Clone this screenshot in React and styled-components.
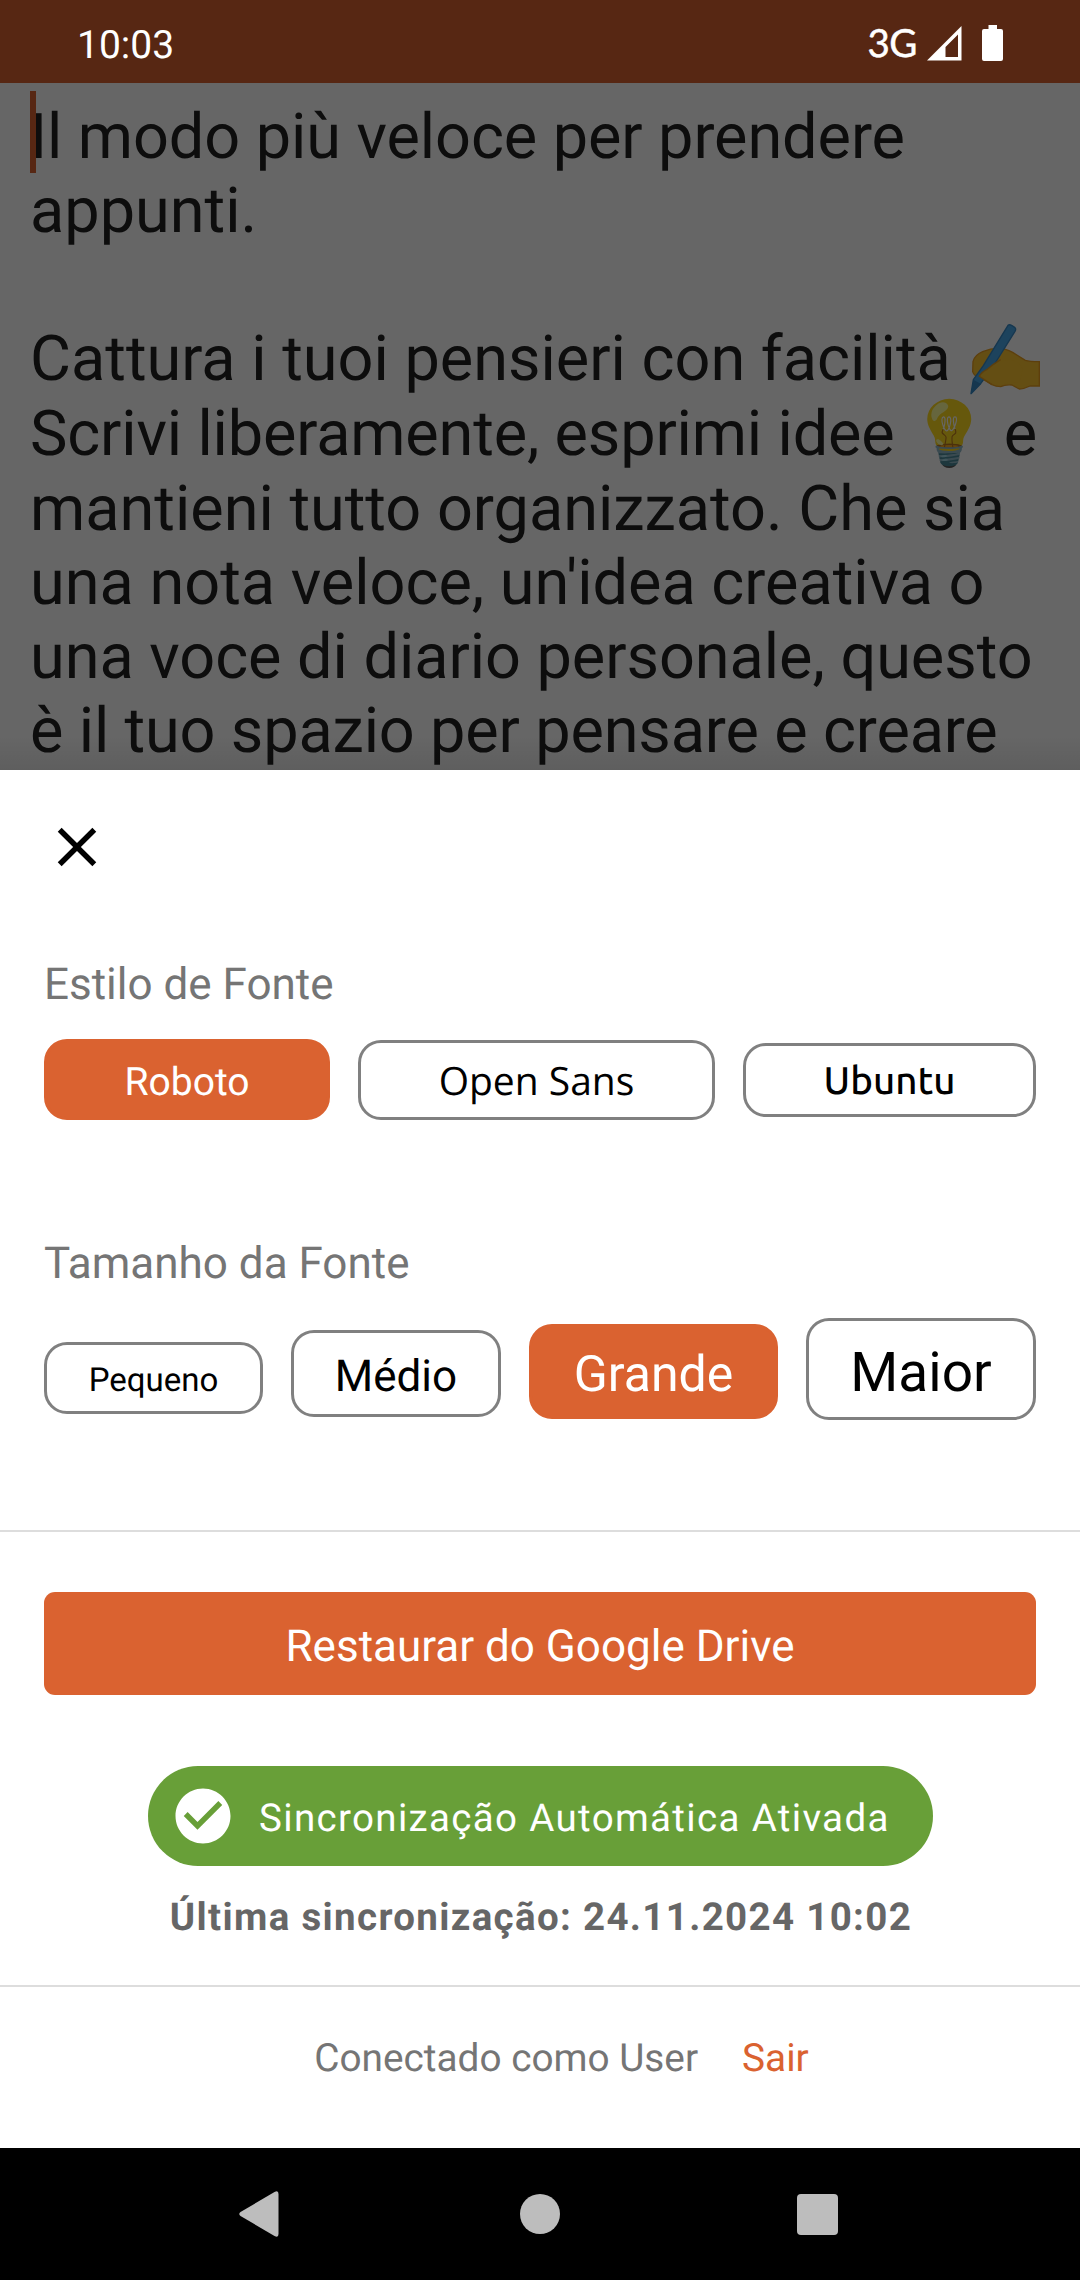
import React, { useState } from "react";
import styled, { createGlobalStyle } from "styled-components";
import { MdCheckCircle, MdClose } from "react-icons/md";

const fontStyles = [
  {
    name: "Roboto",
    family: "Roboto",
    size: 39,
    width: 286,
    height: 81,
    top: 0,
    pad: 6,
  },
  {
    name: "Open Sans",
    family: "Open Sans",
    size: 39,
    width: 357,
    height: 80,
    top: 1,
    pad: 1,
  },
  {
    name: "Ubuntu",
    family: "Ubuntu",
    size: 38.5,
    width: 293,
    height: 74,
    top: 4,
    pad: 2,
    weight: 500,
  },
];

const fontSizes = [
  { name: "Pequeno", size: 33, width: 219, height: 72, top: 24, pad: 4 },
  { name: "Médio", size: 44, width: 210, height: 87, top: 12, pad: 4 },
  { name: "Grande", size: 50, width: 249, height: 95, top: 6, pad: 7 },
  { name: "Maior", size: 55, width: 230, height: 102, top: 0, pad: 8 },
];

const App = () => {
  const [fontStyle, setFontStyle] = useState("Roboto");
  const [fontSize, setFontSize] = useState("Grande");

  return (
    <>
      <GlobalStyle />
      <Screen>
        <StatusBar>
          <Clock>10:03</Clock>
          <StatusIcons>
            <Network>3G</Network>
            <svg width="35" height="35" viewBox="0 0 35 35">
              <path
                fill="#fff"
                fillRule="evenodd"
                d="M34.5 0V34.5H0L34.5 0ZM31 8.5L18.5 21V31H31V8.5Z"
              />
            </svg>
            <Battery width="21" height="36" viewBox="0 0 21 36">
              <path
                fill="#fff"
                d="M6.5 0H15V4H19Q21 4 21 6V34Q21 36 19 36H2Q0 36 0 34V6Q0 4 2 4H6.5Z"
              />
            </Battery>
          </StatusIcons>
        </StatusBar>

        <Note>
          <Caret />
          <Line $tracking={-0.08}>Il modo più veloce per prendere</Line>
          <Line>appunti.</Line>
          <Line />
          <HandLine $tall>
            <span>Cattura i tuoi pensieri con facilità </span>
            <WritingHand />
          </HandLine>
          <Line $tall $tracking={-0.16}>
            Scrivi liberamente, esprimi idee <Emoji>💡</Emoji> e
          </Line>
          <Line>mantieni tutto organizzato. Che sia</Line>
          <Line>una nota veloce, un'idea creativa o</Line>
          <Line $tracking={-0.04}>una voce di diario personale, questo</Line>
          <Line $tracking={-0.15}>è il tuo spazio per pensare e creare</Line>
          <Scrim />
        </Note>

        <Sheet>
          <CloseButton>
            <MdClose size={66} />
          </CloseButton>

          <Label>Estilo de Fonte</Label>
          <StyleRow>
            {fontStyles.map((item) => (
              <Chip
                key={item.name}
                $family={item.family}
                $weight={item.weight}
                $size={item.size}
                $width={item.width}
                $height={item.height}
                $top={item.top}
                $pad={item.pad}
                $active={fontStyle === item.name}
                onClick={() => setFontStyle(item.name)}
              >
                {item.name}
              </Chip>
            ))}
          </StyleRow>

          <Label>Tamanho da Fonte</Label>
          <SizeRow>
            {fontSizes.map((item) => (
              <Chip
                key={item.name}
                $size={item.size}
                $width={item.width}
                $height={item.height}
                $top={item.top}
                $pad={item.pad}
                $active={fontSize === item.name}
                onClick={() => setFontSize(item.name)}
              >
                {item.name}
              </Chip>
            ))}
          </SizeRow>

          <Divider />
          <RestoreButton>Restaurar do Google Drive</RestoreButton>
          <SyncBadge>
            <MdCheckCircle size={66} />
            <span>Sincronização Automática Ativada</span>
          </SyncBadge>
          <LastSync>Última sincronização: 24.11.2024 10:02</LastSync>
          <Divider />
          <Account>
            <span>Conectado como User</span>
            <SignOut>Sair</SignOut>
          </Account>
        </Sheet>

        <NavBar>
          <svg width="40" height="46" viewBox="0 0 40 46">
            <path
              fill="#bdbdbd"
              d="M1.5 21L35.5 1Q39.5 -1 39.5 3V43Q39.5 47 35.5 45L1.5 25Q-1 23 1.5 21Z"
            />
          </svg>
          <HomeKey />
          <RecentsKey />
        </NavBar>
      </Screen>
    </>
  );
};

const WritingHand = () => (
  <Hand
    width="80"
    height="80"
    viewBox="0 0 240 240"
    role="img"
    aria-label="✍️"
  >
    <path
      fill="#fbb912"
      stroke="#e59100"
      strokeWidth="4"
      d="M21 128Q26 108 50 98Q74 88 96 88Q118 88 140 100L178 124Q190 128 220 128V201H192Q176 209 160 210Q148 204 138 198Q118 196 104 203Q90 203 78 197L44 176Q24 172 20 158Z"
    />
    <path
      fill="#2f9be6"
      stroke="#1a78bd"
      strokeWidth="4"
      strokeLinejoin="round"
      d="M126 19Q130 15 138 20L147 26Q151 30 147 37L84 138L44 194L15 224L22 182L52 140Z"
    />
    <path fill="#1a78bd" d="M22 182L44 194L15 224Z" />
    <path
      fill="#fbb912"
      d="M62 152Q92 124 130 122Q160 124 170 150L160 190Q120 192 98 198Q70 196 40 172Q46 160 62 152Z"
    />
    <path
      fill="none"
      stroke="#e59100"
      strokeWidth="4"
      d="M104 122Q80 136 62 152Q46 160 40 172L78 197"
    />
  </Hand>
);

const GlobalStyle = createGlobalStyle`
  * {
    box-sizing: border-box;
  }

  body {
    margin: 0;
    font-family: Roboto, sans-serif;
    text-rendering: geometricPrecision;
    background: #fff;
  }

  svg {
    display: block;
    flex-shrink: 0;
  }

  button {
    border: none;
    padding: 0;
    background: none;
    font-family: inherit;
    text-rendering: inherit;
    cursor: pointer;
  }
`;

const Screen = styled.div`
  width: 1080px;
  height: 2280px;
  display: flex;
  flex-direction: column;
  overflow: hidden;
`;

const StatusBar = styled.header`
  height: 83px;
  padding: 3px 77px 0 77px;
  display: flex;
  justify-content: space-between;
  align-items: center;
  color: #fff;
  background: #572713;
`;

const Clock = styled.span`
  padding-top: 4px;
  font-size: 39px;
  line-height: 48px;
`;

const StatusIcons = styled.div`
  display: flex;
  align-items: center;
`;

const Network = styled.span`
  margin-right: 10px;
  font-family: Lato, sans-serif;
  font-size: 38.5px;
  line-height: 46px;
  letter-spacing: -0.5px;
  -webkit-text-stroke: 0.5px #fff;
`;

const Battery = styled.svg`
  margin-left: 20px;
`;

const Note = styled.main`
  position: relative;
  height: 687px;
  padding: 18px 0 0 30px;
  overflow: hidden;
  color: #212121;
  background: #fff;
`;

const Line = styled.div`
  height: ${({ $tall }) => ($tall ? 75 : 74)}px;
  font-size: 63px;
  line-height: ${({ $tall }) => ($tall ? 73 : 74)}px;
  letter-spacing: ${({ $tracking }) => $tracking || 0}px;
  white-space: pre;
`;

const HandLine = styled(Line)`
  display: flex;
`;

const Hand = styled.svg`
  margin: -4px 0 0 0;
  opacity: 0.87;
`;

const Emoji = styled.span`
  font-family: "Noto Color Emoji", sans-serif;
  line-height: 1;
  opacity: 0.87;
`;

const Caret = styled.div`
  position: absolute;
  left: 30px;
  top: 8px;
  width: 6px;
  height: 82px;
  background: #da6230;
`;

// dims the note and carries the soft shadow of the sheet
const Scrim = styled.div`
  position: absolute;
  inset: 0;
  background: linear-gradient(transparent 95%, rgba(0, 0, 0, 0.08)),
    rgba(0, 0, 0, 0.6);
`;

const Sheet = styled.section`
  height: 1378px;
  display: flex;
  flex-direction: column;
  background: #fff;
`;

const CloseButton = styled.button`
  width: 66px;
  height: 66px;
  margin: 44px 0 0 44px;
  color: #000;
`;

const Label = styled.h2`
  height: 52px;
  margin: 78px 0 0 44px;
  font-size: 44px;
  font-weight: 400;
  line-height: 52px;
  color: #757575;
`;

const Row = styled.div`
  display: flex;
  justify-content: space-between;
  align-items: flex-start;
  padding: 0 44px;
`;

const StyleRow = styled(Row)`
  height: 81px;
  margin-top: 29px;
  margin-bottom: 39px;
`;

const SizeRow = styled(Row)`
  height: 102px;
  margin-top: 29px;
  margin-bottom: 110px;
`;

const Chip = styled.button`
  width: ${({ $width }) => $width}px;
  height: ${({ $height }) => $height}px;
  margin-top: ${({ $top }) => $top}px;
  padding-top: ${({ $pad }) => $pad}px;
  border: 3px solid ${({ $active }) => ($active ? "#da6230" : "#808080")};
  border-radius: 23px;
  font-family: ${({ $family }) => ($family ? `"${$family}", ` : "")} Roboto,
    sans-serif;
  font-size: ${({ $size }) => $size}px;
  font-weight: ${({ $weight }) => $weight || 400};
  line-height: 1;
  color: ${({ $active }) => ($active ? "#fff" : "#000")};
  background: ${({ $active }) => ($active ? "#da6230" : "#fff")};
`;

const Divider = styled.hr`
  width: 100%;
  height: 2px;
  margin: 0;
  border: none;
  flex-shrink: 0;
  background: #ddd;
`;

const RestoreButton = styled.button`
  height: 103px;
  margin: 60px 44px 0;
  padding-top: 4px;
  border-radius: 11px;
  font-size: 44px;
  color: #fff;
  background: #da6230;
`;

const SyncBadge = styled.div`
  width: 785px;
  height: 100px;
  margin: 71px auto 0 148px;
  padding-left: 22px;
  border-radius: 50px;
  display: flex;
  align-items: center;
  gap: 23px;
  font-size: 38.5px;
  letter-spacing: 1.34px;
  white-space: nowrap;
  color: #fff;
  background: #689f38;

  span {
    padding-top: 5px;
  }
`;

const LastSync = styled.p`
  height: 46px;
  margin: 29px 0 44px;
  padding-left: 2px;
  font-size: 38.5px;
  font-weight: 700;
  line-height: 46px;
  letter-spacing: 1.33px;
  text-align: center;
  color: #666;
`;

const Account = styled.footer`
  display: flex;
  justify-content: center;
  gap: 44px;
  margin: 49px 0 0 43px;
  font-size: 38.75px;
  line-height: 46px;
  color: #757575;
`;

const SignOut = styled.button`
  font-size: 38.75px;
  line-height: 46px;
  color: #da6230;
`;

const NavBar = styled.nav`
  height: 132px;
  padding: 0 242px 0 239px;
  display: flex;
  justify-content: space-between;
  align-items: center;
  background: #000;
`;

const HomeKey = styled.div`
  width: 40px;
  height: 40px;
  margin-left: 3px;
  border-radius: 50%;
  background: #bdbdbd;
`;

const RecentsKey = styled.div`
  width: 41px;
  height: 41px;
  border-radius: 4px;
  background: #bdbdbd;
`;

export default App;
